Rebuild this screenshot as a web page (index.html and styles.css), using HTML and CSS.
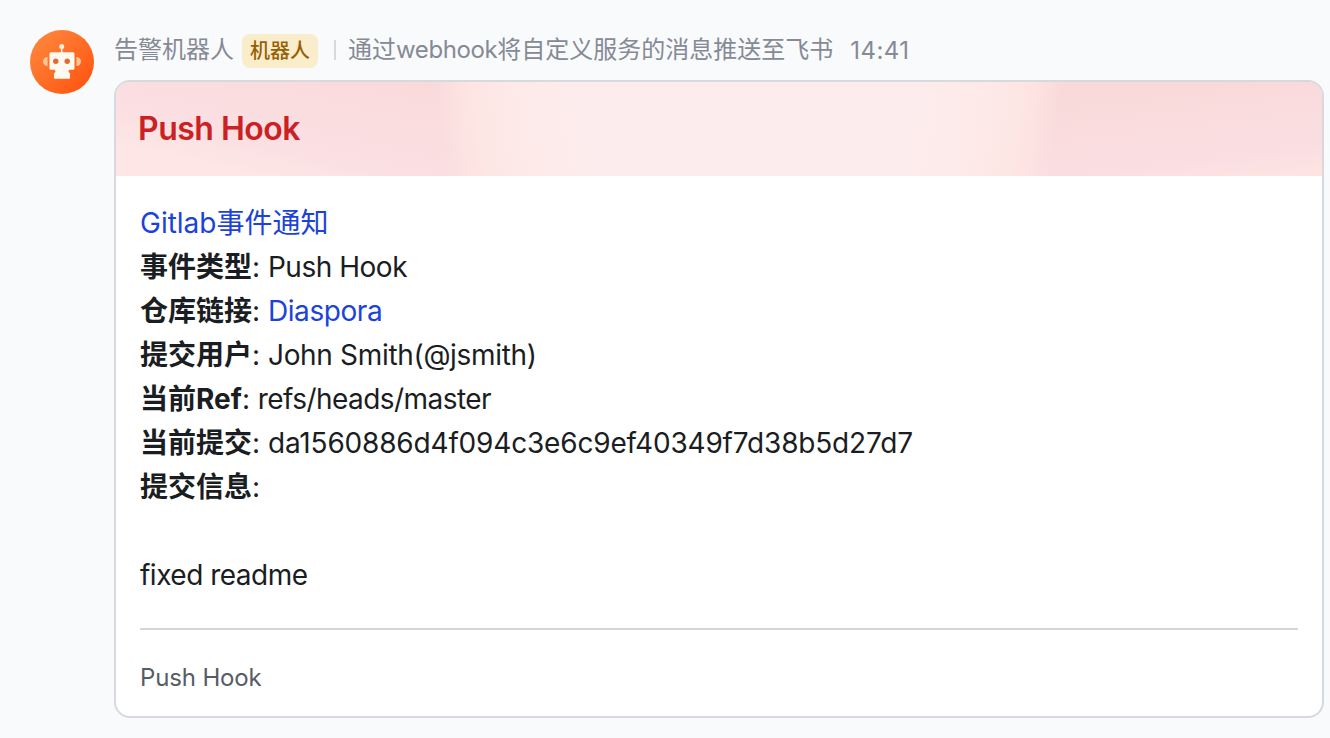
FILE: index.html
```html
<!DOCTYPE html>
<html lang="zh-CN">
<head>
<meta charset="utf-8">
<title>Push Hook</title>
<link rel="stylesheet" href="styles.css">
</head>
<body>
<main class="message">
  <svg class="avatar" viewBox="0 0 64 64" aria-hidden="true">
    <defs>
      <linearGradient id="disc" x1="0" y1="0" x2="1" y2="1">
        <stop offset="0" stop-color="#ff8b41"/>
        <stop offset="1" stop-color="#ff500c"/>
      </linearGradient>
    </defs>
    <circle cx="32" cy="32" r="32" fill="url(#disc)"/>
    <path d="M17.500 27a4.500 4.500 0 0 0 0 9zM46.500 27a4.500 4.500 0 0 1 0 9z" fill="#ffc894"/>
    <circle cx="31.700" cy="16.500" r="2.500" fill="#fff0d8"/>
    <path d="M31.700 18v5" stroke="#fff0d8" stroke-width="1.600"/>
    <path d="M21 22.300h22q1.500 0 1.500 1.500v14.500q0 1.500-1.500 1.500h-3.800l-.8 1.500.8 1.500q.8.300.8 1v4q0 1-1 1H25q-1 0-1-1v-4q0-.7.800-1l.8-1.500-.8-1.500H21q-1.500 0-1.500-1.500V23.800q0-1.500 1.500-1.500z" fill="#fffaf0"/>
    <circle cx="25.800" cy="31.200" r="2.700" fill="#e46a33"/>
    <circle cx="37.200" cy="31.200" r="2.700" fill="#e46a33"/>
  </svg>
  <section class="content">
    <header class="meta">
      <span class="sender">告警机器人</span>
      <span class="tag">机器人</span>
      <span class="divider"></span>
      <span class="description">通过<span class="latin">webhook</span>将自定义服务的消息推送至飞书</span>
      <time class="time">14:41</time>
    </header>
    <article class="card">
      <h1 class="card-header">Push Hook</h1>
      <div class="card-body">
        <p><a class="link">Gitlab事件通知</a></p>
        <p><b>事件类型</b>: <span class="event">Push Hook</span></p>
        <p><b>仓库链接</b>: <a class="link repo">Diaspora</a></p>
        <p><b>提交用户</b>: <span class="user">John Smith(@jsmith)</span></p>
        <p><b>当前Ref</b>: <span class="ref">refs/heads/master</span></p>
        <p><b>当前提交</b>: <span class="hash">da1560886d4f094c3e6c9ef40349f7d38b5d27d7</span></p>
        <p><b>提交信息</b>:</p>
        <p class="commit">fixed readme</p>
      </div>
      <footer class="card-footer">Push Hook</footer>
    </article>
  </section>
</main>
</body>
</html>
```
FILE: styles.css
```css
* { box-sizing: border-box; }

body {
  margin: 0;
  background: #f9fafc;
  color: #1a1d22;
  font-family: Inter, "Noto Sans CJK SC", sans-serif;
}

.message {
  display: flex;
  gap: 20px;
  height: 738px;
  padding: 30px 6px 20px 30px;
}

.avatar { flex: none; width: 64px; height: 64px; }

.content {
  display: flex;
  flex: 1;
  flex-direction: column;
  min-width: 0;
}

.meta {
  display: flex;
  flex: none;
  align-items: center;
  height: 40px;
  margin-bottom: 10px;
  color: #858a94;
  font-size: 24px;
  line-height: 40px;
  white-space: nowrap;
}

.latin { letter-spacing: -0.4px; }

.tag {
  height: 34px;
  margin: 2px 0 0 8px;
  padding: 0 8px;
  border-radius: 8px;
  background: #f9edcb;
  color: #966105;
  font-size: 20px;
  font-weight: 500;
  line-height: 35px;
}

.divider {
  width: 2px;
  height: 20px;
  margin: 0 12px 0 16px;
  background: #d7d9de;
}

.time { margin-left: 17px; padding-top: 1px; letter-spacing: 0.45px; }

.card {
  display: flex;
  flex: 1;
  flex-direction: column;
  overflow: hidden;
  border: 2px solid #d6d9de;
  border-radius: 16px;
  background: #fff;
}

.card-header {
  flex: none;
  height: 94px;
  margin: 0;
  padding: 0 22px;
  background:
    radial-gradient(ellipse 312px 420px at 632px -10px, #fdecee 0, #fdecee 50%, #fdebea 70%, #fde7e5 86%, #fde3e2 92%, rgba(252, 223, 226, 0) 100%),
    linear-gradient(173deg, #f9dadb 20%, #fadddf 60%, #fbdee2 78%, #fde3e2 95%) 920px 0 / 286px 94px no-repeat,
    linear-gradient(193deg, #f9dadb 5%, #fadddf 40%, #fbdfe2 60%, #fde6e5 82%) 0 0 / 360px 94px no-repeat,
    #fbdfe2;
  color: #cc2123;
  font-size: 32px;
  font-weight: 600;
  letter-spacing: -0.5px;
  line-height: 94px;
}

.card-body {
  flex: none;
  height: 454px;
  margin: 0 24px;
  padding-top: 24.500px;
  border-bottom: 2px solid #d5d6d8;
  font-size: 28px;
  line-height: 44px;
}

.card-body p { margin: 0; height: 44px; white-space: pre; }
.card-body b { font-weight: 700; }
.card-body .commit { margin-top: 44px; letter-spacing: -0.5px; }
.link { color: #1b43d8; }
.event { letter-spacing: -0.48px; }
.repo { letter-spacing: -0.42px; }
.user { letter-spacing: -0.32px; }
.ref { letter-spacing: -0.56px; }
.hash { letter-spacing: -0.18px; }

.card-footer {
  padding: 28px 24px 0;
  color: #565c65;
  font-size: 24px;
  letter-spacing: -0.15px;
  line-height: 40px;
}
```
